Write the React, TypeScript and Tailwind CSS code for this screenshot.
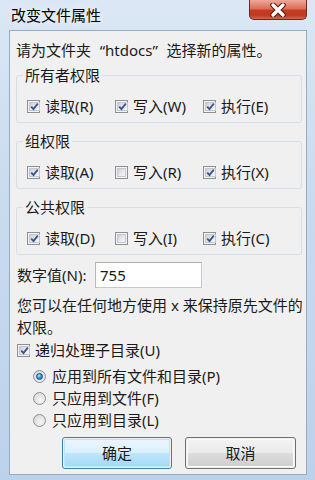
import React from "react";

const Check = ({ checked }: { checked: boolean }) => (
  <span className="w-[13px] h-[13px] shrink-0 border border-[#8e8f8f] bg-[#f4f4f4] p-[1px] flex">
    <span className="flex-1 border border-[#c4c8ce] bg-[linear-gradient(135deg,#c9ccd1_0%,#e6e8eb_50%,#f7f7f7_100%)] flex items-center justify-center">
      {checked && (
        <svg width="9" height="9" viewBox="0 0 9 9">
          <path d="M1.2 4.6 L3.5 7 L7.8 1.6" fill="none" stroke="#3d5592" strokeWidth="1.9" />
        </svg>
      )}
    </span>
  </span>
);

const Radio = ({ checked }: { checked: boolean }) => (
  <span className="w-[13px] h-[13px] shrink-0 rounded-full border border-[#8e8f8f] bg-[radial-gradient(circle_at_60%_65%,#f6f6f6_0%,#dcdcdc_70%,#cfcfcf_100%)] flex items-center justify-center">
    {checked && (
      <span className="w-[7px] h-[7px] rounded-full bg-[radial-gradient(circle_at_40%_35%,#c6f0ff_0%,#3d9fe0_40%,#1a5aa6_100%)] border border-[#184f86]" />
    )}
  </span>
);

const CheckItem = ({ checked, label }: { checked: boolean; label: string }) => (
  <div className="flex items-center h-[20px]">
    <Check checked={checked} />
    <span className="ml-[5px] whitespace-nowrap">{label}</span>
  </div>
);

const Group = ({
  title,
  items,
  className,
}: {
  title: string;
  items: [boolean, string][];
  className: string;
}) => (
  <fieldset className={`ml-[6px] w-[286px] border border-[#d5dfe5] rounded-[3px] pb-[6px] ${className}`}>
    <legend className="ml-[6px] px-[2px] leading-[20px]">{title}</legend>
    <div className="mt-[11px] grid grid-cols-[88px_88px_88px] pl-[10px]">
      {items.map(([c, l]) => (
        <CheckItem key={l} checked={c} label={l} />
      ))}
    </div>
  </fieldset>
);

export default function App() {
  return (
    <div className="w-[315px] h-[480px] relative overflow-hidden flex flex-col bg-[linear-gradient(to_bottom,#dbe7f4_0%,#c9dbef_40%,#bcd2ea_100%)] font-['Noto_Sans','Noto_Sans_CJK_SC',sans-serif] text-[15px] text-[#1a1a1a]">
      <div className="h-[30px] shrink-0 pl-[11px] flex items-center leading-[30px] text-black [text-shadow:0_0_8px_#ffffff]">
        改变文件属性
      </div>
      <div className="absolute top-0 right-[8px] w-[58px] h-[20px] rounded-b-[5px] border border-t-0 border-[#6e2a20] bg-[linear-gradient(to_bottom,#eca99b_0%,#dd6f58_45%,#c73b22_55%,#bf3a22_80%,#d2664a_100%)] flex items-center justify-center">
        <svg width="18" height="14" viewBox="0 0 18 14">
          <path d="M4 2 L14 12 M14 2 L4 12" stroke="#5a2018" strokeWidth="5.5" strokeLinecap="round" />
          <path d="M4 2 L14 12 M14 2 L4 12" stroke="#ffffff" strokeWidth="3.2" strokeLinecap="round" />
        </svg>
      </div>
      <div className="ml-[9px] mr-[8px] h-[445px] border border-[#96abc4] bg-[#f0f0f0] flex flex-col">
        <div className="mt-[9px] pl-[6px] leading-[20px] whitespace-nowrap">
          请为文件夹<span className="inline-block w-[14px] text-right">“</span>htdocs<span className="inline-block w-[14px] text-left">”</span>选择新的属性。
        </div>
        <Group
          title="所有者权限"
          className="mt-[5px]"
          items={[
            [true, "读取(R)"],
            [true, "写入(W)"],
            [true, "执行(E)"],
          ]}
        />
        <Group
          title="组权限"
          className="mt-[8px]"
          items={[
            [true, "读取(A)"],
            [false, "写入(R)"],
            [true, "执行(X)"],
          ]}
        />
        <Group
          title="公共权限"
          className="mt-[8px]"
          items={[
            [true, "读取(D)"],
            [false, "写入(I)"],
            [true, "执行(C)"],
          ]}
        />
        <div className="mt-[7px] flex items-center pl-[7px] h-[26px]">
          <span className="w-[78px] whitespace-nowrap">数字值(N):</span>
          <div className="w-[107px] h-[26px] bg-white border border-[#c5cad0] border-t-[#abadb3] border-l-[#b7bbc1] flex items-center pl-[4px]">
            755
          </div>
        </div>
        <div className="mt-[6px] pl-[7px] leading-[22px] whitespace-nowrap">
          您可以在任何地方使用 x 来保持原先文件的
          <br />
          权限。
        </div>
        <div className="mt-[2px] pl-[7px]">
          <CheckItem checked={true} label="递归处理子目录(U)" />
        </div>
        <div className="mt-[5px] pl-[23px] flex flex-col">
          {[
            [true, "应用到所有文件和目录(P)"],
            [false, "只应用到文件(F)"],
            [false, "只应用到目录(L)"],
          ].map(([c, l]) => (
            <div key={l as string} className="h-[22px] flex items-center">
              <Radio checked={c as boolean} />
              <span className="ml-[6px] whitespace-nowrap">{l as string}</span>
            </div>
          ))}
        </div>
        <div className="mt-[6px] pl-[52px] flex gap-[13px]">
          <button className="w-[110px] h-[32px] rounded-[3px] border border-[#3c7fb1] p-[1px] flex">
            <span className="flex-1 rounded-[2px] border border-[#b9e6fb] bg-[linear-gradient(to_bottom,#eaf6fd_0%,#d9f0fc_50%,#bee6fd_51%,#a7d9f5_100%)] flex items-center justify-center">
              确定
            </span>
          </button>
          <button className="w-[111px] h-[32px] rounded-[3px] border border-[#707070] p-[1px] flex">
            <span className="flex-1 rounded-[2px] border border-[#fcfcfc] bg-[linear-gradient(to_bottom,#f2f2f2_0%,#ebebeb_50%,#dddddd_51%,#cfcfcf_100%)] flex items-center justify-center">
              取消
            </span>
          </button>
        </div>
      </div>
    </div>
  );
}
